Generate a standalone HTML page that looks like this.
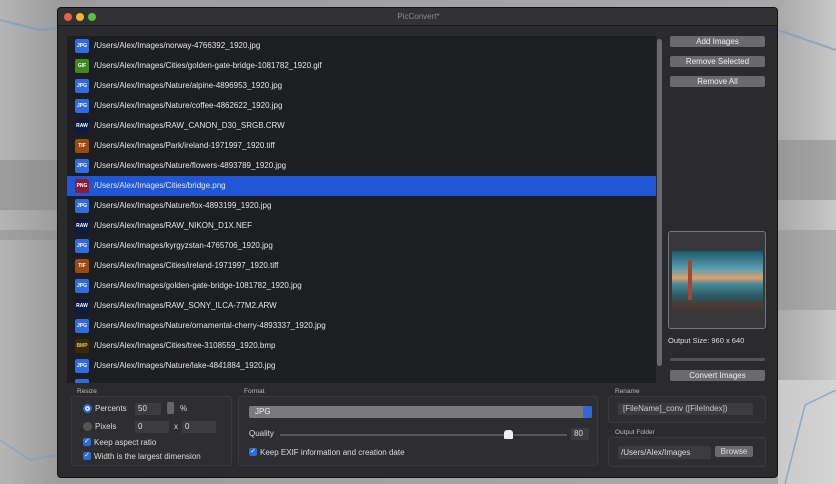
<!DOCTYPE html>
<html><head><meta charset="utf-8"><style>
*{box-sizing:border-box;margin:0;padding:0}
body{width:836px;height:484px;overflow:hidden;position:relative;font-family:"Liberation Sans",sans-serif;font-size:8px;color:#ddd;
background:linear-gradient(90deg,#b5b5b5 0%,#9c9c9c 7%,#a8a8a8 93%,#c8c8c8 100%)}
.a{position:absolute}
.win{left:57px;top:7px;width:721px;height:471px;background:#2b2b2d;border:1px solid #111;border-radius:4px;overflow:hidden}
.title{left:0;top:0;width:721px;height:18px;background:#323234;border-bottom:1px solid #1a1a1a;text-align:center;line-height:17px;color:#8a8a8a;font-size:8px}
.dot{width:8px;height:8px;border-radius:50%;top:5px}
.list{left:9px;top:28px;width:589px;height:347px;background:#1d1e21}
.row{position:absolute;left:0;width:589px;height:20px;line-height:20px;color:#e6e6e6;font-size:8px}
.row.sel{background:#1f57d6}
.ic{position:absolute;left:8px;top:3px;width:14px;height:14px;border-radius:2px;font-size:5px;font-weight:bold;color:#fff;text-align:center;line-height:14px}
.row span.t{position:absolute;left:27px}
.btn{left:612px;width:95px;height:11px;background:#6a6a6c;border-radius:2px;text-align:center;line-height:11px;color:#eee;font-size:8px}
.box{border:1px solid #3a3a3c;background:#2e2e30;border-radius:3px}
.lbl{font-size:6.5px;color:#bbb}
.fld{background:#3c3c3e;color:#ddd;font-size:8px;line-height:12px;padding-left:3px;height:12px}
.cb{width:8px;height:8px;background:#2e6ad9;border-radius:2px;color:#fff;font-size:7px;line-height:8px;text-align:center}
</style></head><body>
<svg class="a" style="left:0;top:0" width="836" height="484">
<rect x="0" y="160" width="57" height="50" fill="#858585" opacity=".5"/>
<rect x="0" y="230" width="57" height="10" fill="#858585" opacity=".4"/>
<rect x="778" y="140" width="58" height="60" fill="#858585" opacity=".5"/>
<rect x="778" y="230" width="58" height="80" fill="#8a8a8a" opacity=".4"/>
<rect x="778" y="380" width="58" height="104" fill="#d8d8d8" opacity=".7"/>
<polyline points="0,20 40,30 57,28" stroke="#6b9ac6" stroke-width="2" fill="none" opacity=".6"/>
<polyline points="778,30 836,50" stroke="#6b9ac6" stroke-width="2" fill="none" opacity=".6"/>
<polyline points="836,390 805,405 785,484" stroke="#6b9ac6" stroke-width="1.5" fill="none" opacity=".7"/>
<polyline points="0,440 30,460 57,455" stroke="#6b9ac6" stroke-width="1.5" fill="none" opacity=".5"/>
</svg>
<div class="a win">
 <div class="a title">PicConvert*</div>
 <div class="a dot" style="left:6px;background:#ee5a52"></div>
 <div class="a dot" style="left:18px;background:#f0b730"></div>
 <div class="a dot" style="left:30px;background:#5bc23f"></div>
 <div class="a list">
  <div class="row" style="top:0"><div class="ic" style="background:#2e6ce0">JPG</div><span class="t">/Users/Alex/Images/norway-4766392_1920.jpg</span></div>
  <div class="row" style="top:20px"><div class="ic" style="background:#3d8a1e">GIF</div><span class="t">/Users/Alex/Images/Cities/golden-gate-bridge-1081782_1920.gif</span></div>
  <div class="row" style="top:40px"><div class="ic" style="background:#2e6ce0">JPG</div><span class="t">/Users/Alex/Images/Nature/alpine-4896953_1920.jpg</span></div>
  <div class="row" style="top:60px"><div class="ic" style="background:#2e6ce0">JPG</div><span class="t">/Users/Alex/Images/Nature/coffee-4862622_1920.jpg</span></div>
  <div class="row" style="top:80px"><div class="ic" style="background:#0c1a4a">RAW</div><span class="t">/Users/Alex/Images/RAW_CANON_D30_SRGB.CRW</span></div>
  <div class="row" style="top:100px"><div class="ic" style="background:#9a4a12">TIF</div><span class="t">/Users/Alex/Images/Park/ireland-1971997_1920.tiff</span></div>
  <div class="row" style="top:120px"><div class="ic" style="background:#2e6ce0">JPG</div><span class="t">/Users/Alex/Images/Nature/flowers-4893789_1920.jpg</span></div>
  <div class="row sel" style="top:140px"><div class="ic" style="background:#8a1c3a">PNG</div><span class="t">/Users/Alex/Images/Cities/bridge.png</span></div>
  <div class="row" style="top:160px"><div class="ic" style="background:#2e6ce0">JPG</div><span class="t">/Users/Alex/Images/Nature/fox-4893199_1920.jpg</span></div>
  <div class="row" style="top:180px"><div class="ic" style="background:#0c1a4a">RAW</div><span class="t">/Users/Alex/Images/RAW_NIKON_D1X.NEF</span></div>
  <div class="row" style="top:200px"><div class="ic" style="background:#2e6ce0">JPG</div><span class="t">/Users/Alex/Images/kyrgyzstan-4765706_1920.jpg</span></div>
  <div class="row" style="top:220px"><div class="ic" style="background:#9a4a12">TIF</div><span class="t">/Users/Alex/Images/Cities/ireland-1971997_1920.tiff</span></div>
  <div class="row" style="top:240px"><div class="ic" style="background:#2e6ce0">JPG</div><span class="t">/Users/Alex/Images/golden-gate-bridge-1081782_1920.jpg</span></div>
  <div class="row" style="top:260px"><div class="ic" style="background:#0c1a4a">RAW</div><span class="t">/Users/Alex/Images/RAW_SONY_ILCA-77M2.ARW</span></div>
  <div class="row" style="top:280px"><div class="ic" style="background:#2e6ce0">JPG</div><span class="t">/Users/Alex/Images/Nature/ornamental-cherry-4893337_1920.jpg</span></div>
  <div class="row" style="top:300px"><div class="ic" style="background:#3a2a08;color:#e0c070">BMP</div><span class="t">/Users/Alex/Images/Cities/tree-3108559_1920.bmp</span></div>
  <div class="row" style="top:320px"><div class="ic" style="background:#2e6ce0">JPG</div><span class="t">/Users/Alex/Images/Nature/lake-4841884_1920.jpg</span></div>
  <div class="row" style="top:340px;height:7px;overflow:hidden"><div class="ic" style="background:#2e6ce0"></div></div>
 </div>
 <div class="a" style="left:599px;top:31px;width:5px;height:327px;background:#6a6a6c;border-radius:3px"></div>
 <div class="a btn" style="top:28px">Add Images</div>
 <div class="a btn" style="top:48px">Remove Selected</div>
 <div class="a btn" style="top:68px">Remove All</div>
 <div class="a" style="left:610px;top:223px;width:98px;height:98px;border:1px solid #777;border-radius:3px;background:#38383a"></div>
 <div class="a" style="left:614px;top:243px;width:91px;height:60px;background:linear-gradient(180deg,#1c5a6a 0%,#5aa0b0 30%,#e0a070 45%,#4a8898 55%,#2a5a66 75%,#4a3a30 90%,#3a3a36 100%)"></div>
 <div class="a" style="left:630px;top:252px;width:4px;height:40px;background:#b0412a"></div>
 <div class="a" style="left:610px;top:328px;color:#ddd;font-size:7.5px">Output Size: 960 x 640</div>
 <div class="a" style="left:612px;top:350px;width:95px;height:3px;background:#555;border-radius:2px"></div>
 <div class="a btn" style="top:362px">Convert Images</div>

 <div class="a lbl" style="left:19px;top:380px">Resize</div>
 <div class="a box" style="left:13px;top:388px;width:161px;height:70px"></div>
 <div class="a" style="left:25px;top:396px;width:9px;height:9px;border-radius:50%;background:#2e6ad9;border:2.5px solid #2e6ad9;box-shadow:inset 0 0 0 1.5px #fff"></div>
 <div class="a" style="left:37px;top:396px">Percents</div>
 <div class="a fld" style="left:77px;top:395px;width:26px">50</div>
 <div class="a" style="left:109px;top:394px;width:7px;height:12px;background:#666;border-radius:2px"></div>
 <div class="a" style="left:122px;top:396px">%</div>
 <div class="a" style="left:25px;top:414px;width:9px;height:9px;border-radius:50%;background:#555"></div>
 <div class="a" style="left:37px;top:414px">Pixels</div>
 <div class="a fld" style="left:77px;top:413px;width:34px">0</div>
 <div class="a" style="left:116px;top:414px">x</div>
 <div class="a fld" style="left:124px;top:413px;width:34px">0</div>
 <div class="a cb" style="left:25px;top:430px">✓</div><div class="a" style="left:36px;top:430px">Keep aspect ratio</div>
 <div class="a cb" style="left:25px;top:444px">✓</div><div class="a" style="left:36px;top:444px">Width is the largest dimension</div>

 <div class="a lbl" style="left:186px;top:380px">Format</div>
 <div class="a box" style="left:180px;top:388px;width:360px;height:70px"></div>
 <div class="a" style="left:191px;top:398px;width:343px;height:12px;background:#7a7a7c;border-radius:2px;line-height:12px;padding-left:6px;color:#eee">JPG</div>
 <div class="a" style="left:525px;top:398px;width:9px;height:12px;background:#2e6ad9;border-radius:2px"></div>
 <div class="a" style="left:191px;top:421px">Quality</div>
 <div class="a" style="left:222px;top:426px;width:287px;height:2px;background:#555"></div>
 <div class="a" style="left:446px;top:422px;width:9px;height:9px;background:#eee;border-radius:3px 3px 1px 1px"></div>
 <div class="a fld" style="left:513px;top:420px;width:18px">80</div>
 <div class="a cb" style="left:191px;top:440px">✓</div><div class="a" style="left:202px;top:440px">Keep EXIF information and creation date</div>

 <div class="a lbl" style="left:557px;top:380px">Rename</div>
 <div class="a box" style="left:550px;top:388px;width:158px;height:27px"></div>
 <div class="a fld" style="left:560px;top:395px;width:135px;color:#ccc;padding-left:5px">[FileName]_conv ([FileIndex])</div>
 <div class="a lbl" style="left:557px;top:421px">Output Folder</div>
 <div class="a box" style="left:550px;top:429px;width:158px;height:30px"></div>
 <div class="a fld" style="left:560px;top:438px;width:93px;height:13px;line-height:13px">/Users/Alex/Images</div>
 <div class="a" style="left:657px;top:438px;width:38px;height:11px;background:#6a6a6c;border-radius:2px;text-align:center;line-height:11px">Browse</div>
</div>
</body></html>
